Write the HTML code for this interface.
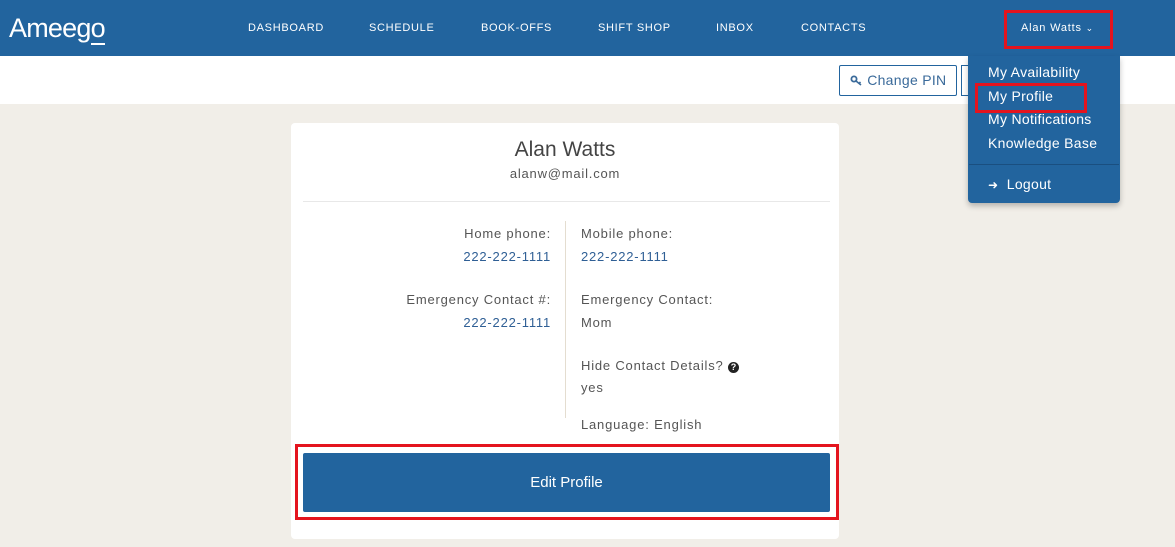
<!DOCTYPE html>
<html><head><meta charset="utf-8"><style>
*{box-sizing:border-box;margin:0;padding:0}
body{width:1175px;height:547px;overflow:hidden;background:#f1eee8;font-family:"Liberation Sans",sans-serif;position:relative;color:#555}
.abs{position:absolute}
.nav{left:0;top:0;width:1175px;height:56px;background:#22649e}
.logo{left:9px;top:13px;font-size:27px;color:#fff;letter-spacing:-0.8px}
.logo u{text-decoration:none;border-bottom:2px solid #fff}
.ni{top:22px;font-size:11px;color:#fff;letter-spacing:.7px}
.sub{left:0;top:56px;width:1175px;height:48px;background:#fff}
.pin{left:839px;top:65px;width:118px;height:31px;border:1px solid #22649e;border-radius:2px;color:#3a6a9a;font-size:14px;padding:6px 0 0 10px;letter-spacing:.3px}
.pin2{left:961px;top:65px;width:20px;height:31px;border:1px solid #22649e;border-right:none}
.dd{left:968px;top:56px;width:152px;height:147px;background:#22649e;border-radius:0 0 4px 4px;box-shadow:0 3px 6px rgba(0,0,0,.25)}
.di{left:988px;font-size:14px;color:#fff;letter-spacing:.3px}
.red{border:3px solid #e4141e}
.card{left:291px;top:123px;width:548px;height:416px;background:#fff;border-radius:4px}
.t{font-size:13px;color:#555;letter-spacing:.8px}
.l{color:#2f5f95}
.btn{left:303px;top:453px;width:527px;height:59px;background:#22649e;border-radius:2px;color:#fff;font-size:15px;text-align:center;line-height:59px}
</style></head><body>
<div class="abs nav"></div>
<div class="abs logo">Ameeg<u>o</u></div>
<div class="abs ni" style="left:248px">DASHBOARD</div>
<div class="abs ni" style="left:369px">SCHEDULE</div>
<div class="abs ni" style="left:481px">BOOK-OFFS</div>
<div class="abs ni" style="left:598px">SHIFT SHOP</div>
<div class="abs ni" style="left:716px">INBOX</div>
<div class="abs ni" style="left:801px">CONTACTS</div>
<div class="abs ni" style="left:1021px;letter-spacing:.8px">Alan Watts <span style="font-size:9px">&#8964;</span></div>
<div class="abs red" style="left:1004px;top:10px;width:109px;height:39px"></div>
<div class="abs sub"></div>
<div class="abs pin"><svg width="13" height="11" viewBox="0 0 13 11" style="vertical-align:-1px"><circle cx="4" cy="4" r="2.6" fill="none" stroke="#3a6a9a" stroke-width="1.8"/><path d="M6 6l5 4M9 8.5l1.5-1.5" stroke="#3a6a9a" stroke-width="1.6"/></svg> Change PIN</div>
<div class="abs pin2"></div>
<div class="abs dd"></div>
<div class="abs di" style="top:64px">My Availability</div>
<div class="abs di" style="top:88px">My Profile</div>
<div class="abs red" style="left:975px;top:83px;width:112px;height:30px"></div>
<div class="abs di" style="top:111px">My Notifications</div>
<div class="abs di" style="top:135px">Knowledge Base</div>
<div class="abs" style="left:969px;top:164px;width:150px;height:1px;background:#1a4f80"></div>
<div class="abs di" style="top:176px"><span style="font-size:12px">&#10140;</span>&nbsp; Logout</div>
<div class="abs card"></div>
<div class="abs" style="left:291px;top:138px;width:548px;text-align:center;font-size:21px;color:#444">Alan Watts</div>
<div class="abs t" style="left:291px;top:166px;width:548px;text-align:center">alanw@mail.com</div>
<div class="abs" style="left:303px;top:201px;width:527px;height:1px;background:#e8e8e8"></div>
<div class="abs" style="left:565px;top:221px;width:1px;height:197px;background:#e4ddd0"></div>
<div class="abs t" style="right:624px;top:226px;text-align:right">Home phone:</div>
<div class="abs t l" style="right:624px;top:249px">222-222-1111</div>
<div class="abs t" style="right:624px;top:292px;white-space:nowrap">Emergency Contact #:</div>
<div class="abs t l" style="right:624px;top:315px">222-222-1111</div>
<div class="abs t" style="left:581px;top:226px">Mobile phone:</div>
<div class="abs t l" style="left:581px;top:249px">222-222-1111</div>
<div class="abs t" style="left:581px;top:292px">Emergency Contact:</div>
<div class="abs t" style="left:581px;top:315px">Mom</div>
<div class="abs t" style="left:581px;top:358px">Hide Contact Details? <span style="display:inline-block;width:11px;height:11px;border-radius:50%;background:#222;color:#fff;font-size:9px;font-weight:bold;text-align:center;line-height:11px;letter-spacing:0">?</span></div>
<div class="abs t" style="left:581px;top:380px">yes</div>
<div class="abs t" style="left:581px;top:417px">Language: English</div>
<div class="abs red" style="left:295px;top:444px;width:544px;height:76px"></div>
<div class="abs btn">Edit Profile</div>
</body></html>
